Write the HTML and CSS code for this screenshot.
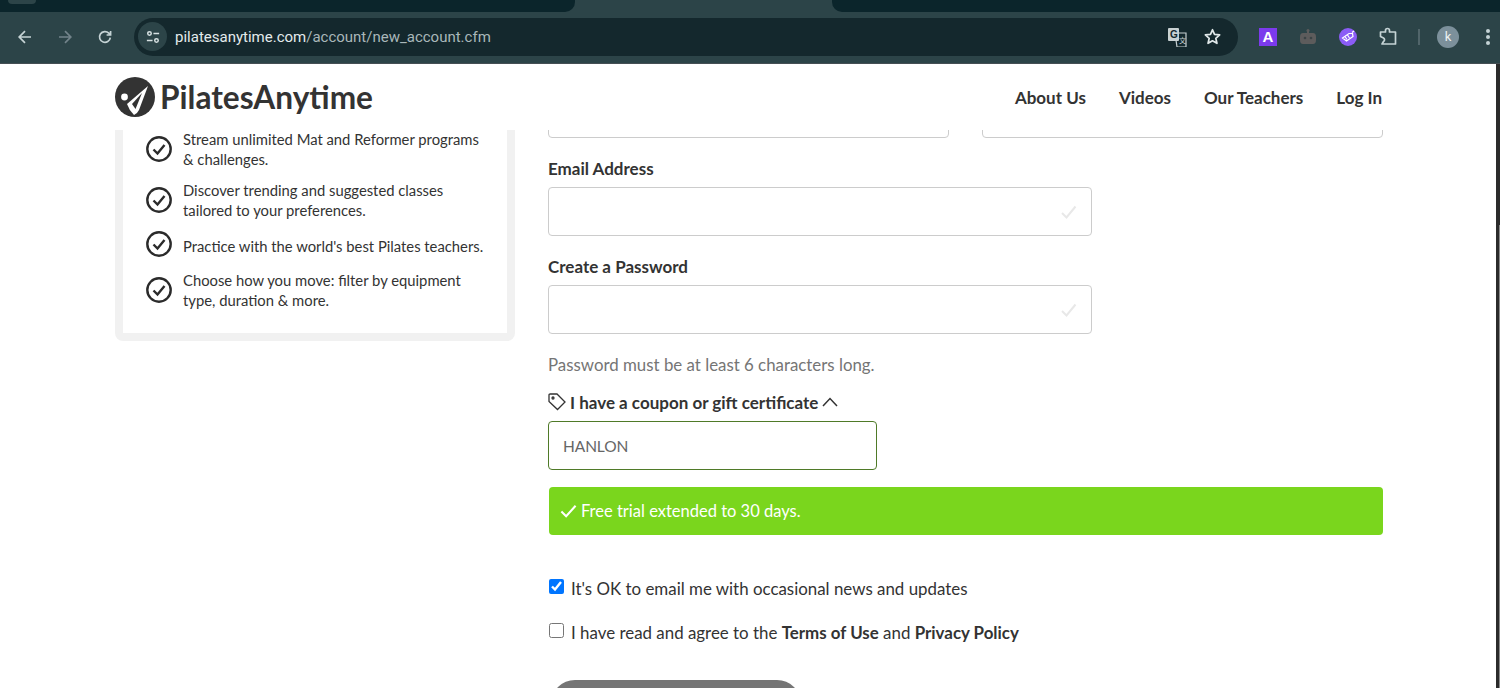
FILE: index.html
```html
<!DOCTYPE html>
<html lang="en">
<head>
    <meta charset="UTF-8">
    <title>Pilates Anytime - New Account</title>
    <link rel="stylesheet" href="styles.css">
</head>
<body>
    <div class="tab-strip">
        <div class="tab-left"><div class="tab-stub"></div></div>
        <div class="tab-active"></div>
        <div class="tab-right"></div>
    </div>

    <div class="toolbar">
        <div class="nav-buttons">
            <svg class="tool-icon" viewBox="0 0 16 16"><path d="M14 8H2.500M8 2.200 2.200 8 8 13.800"/></svg>
            <svg class="tool-icon dim" viewBox="0 0 16 16"><path d="M2 8h11.500M8 2.200 13.800 8 8 13.800"/></svg>
            <svg class="tool-icon" viewBox="0 0 16 16"><path d="M13.300 8.600A5.400 5.400 0 1 1 11.800 4.200L13.600 6M13.600 2v4H9.600"/></svg>
        </div>
        <div class="address-bar">
            <div class="site-chip">
                <svg class="chip-icon" viewBox="0 0 16 16"><circle cx="4" cy="4" r="2"/><path d="M8.500 4H15M1 12h6.500"/><circle cx="12" cy="12" r="2"/></svg>
            </div>
            <span class="url"><b>pilatesanytime.com</b>/account/new_account.cfm</span>
            <div class="address-end">
                <svg class="translate-icon" viewBox="0 0 20 20">
                    <path class="doc-back" d="M8 6h11v14H10z"/>
                    <rect class="doc-front" x="1" y="1" width="11" height="13" rx="1"/>
                    <text class="doc-letter" x="3" y="11">G</text>
                    <text class="doc-letter-back" x="12" y="16">文</text>
                </svg>
                <svg class="star-icon" viewBox="0 0 24 24"><path d="M12 3.500 14.600 9.300 21 10l-4.800 4.300 1.400 6.300L12 17.400 6.400 20.600l1.400-6.300L3 10l6.400-.7z"/></svg>
            </div>
        </div>
        <div class="extensions">
            <div class="ext-a">A</div>
            <svg class="ext-robot" viewBox="0 0 18 18">
                <circle cx="9" cy="2.500" r="1.500"/>
                <rect x="8" y="3" width="2" height="3"/>
                <path d="M4 5h10q3 0 3 4v3q0 4-3 4H4q-3 0-3-4V9q0-4 3-4z"/>
                <circle class="robot-eye" cx="6" cy="10" r="1.300"/>
                <circle class="robot-eye" cx="12" cy="10" r="1.300"/>
            </svg>
            <svg class="ext-tag" viewBox="0 0 18 18">
                <circle class="tag-bg" cx="9" cy="9" r="9"/>
                <path class="tag-line" d="M3.500 10 10 5.500h3.500l.5 3-6.500 4.500z"/>
                <path class="tag-line" d="M13 4.500 15 3M6 8.500l2 3M8.500 7l2 3"/>
            </svg>
            <svg class="ext-puzzle" viewBox="0 0 20 20"><path d="M2 5h5V3.500a2 2 0 0 1 4 0V5h6v12H3.500l1.500-2.500a2 2 0 0 0 0-3.500L2 9.500z"/></svg>
            <div class="toolbar-divider"></div>
            <div class="avatar">k</div>
            <div class="kebab"><i></i><i></i><i></i></div>
        </div>
    </div>

    <div class="viewport">
        <div class="page">
            <header class="site-header">
                <a class="logo">
                    <svg class="logo-mark" viewBox="0 0 40 40">
                        <circle cx="20" cy="20" r="20" fill="#333"/>
                        <circle cx="9.500" cy="20" r="3.400" fill="#fff"/>
                        <path d="M33 9 12 27q2 6 7 11 3-1 5-5z" fill="#fff"/>
                        <path d="M27 16 17 27l3.500 5z" fill="#333"/>
                    </svg>
                    <span class="logo-text">PilatesAnytime</span>
                </a>
                <nav class="site-nav">
                    <a>About Us</a>
                    <a>Videos</a>
                    <a>Our Teachers</a>
                    <a>Log In</a>
                </nav>
            </header>

            <main class="signup">
                <aside class="benefits">
                    <ul class="benefit-list">
                        <li>
                            <svg class="circle-check" viewBox="0 0 26 26"><circle cx="13" cy="13" r="11.700"/><path d="M7.500 13.500 11.500 17.500 18.500 9"/></svg>
                            <span>Stream unlimited Mat and Reformer programs &amp; challenges.</span>
                        </li>
                        <li>
                            <svg class="circle-check" viewBox="0 0 26 26"><circle cx="13" cy="13" r="11.700"/><path d="M7.500 13.500 11.500 17.500 18.500 9"/></svg>
                            <span>Discover trending and suggested classes tailored to your preferences.</span>
                        </li>
                        <li class="single-line">
                            <svg class="circle-check" viewBox="0 0 26 26"><circle cx="13" cy="13" r="11.700"/><path d="M7.500 13.500 11.500 17.500 18.500 9"/></svg>
                            <span>Practice with the world's best Pilates teachers.</span>
                        </li>
                        <li>
                            <svg class="circle-check" viewBox="0 0 26 26"><circle cx="13" cy="13" r="11.700"/><path d="M7.500 13.500 11.500 17.500 18.500 9"/></svg>
                            <span>Choose how you move: filter by equipment type, duration &amp; more.</span>
                        </li>
                    </ul>
                </aside>

                <form class="account-form">
                    <div class="name-row">
                        <input class="text-input" type="text">
                        <input class="text-input" type="text">
                    </div>

                    <label class="field-label">Email Address</label>
                    <div class="input-wrap">
                        <input class="text-input" type="text">
                        <svg class="input-check" viewBox="0 0 16 14"><path d="M1.500 8 6 12.500 15 1.500"/></svg>
                    </div>

                    <label class="field-label">Create a Password</label>
                    <div class="input-wrap">
                        <input class="text-input" type="text">
                        <svg class="input-check" viewBox="0 0 16 14"><path d="M1.500 8 6 12.500 15 1.500"/></svg>
                    </div>

                    <p class="hint">Password must be at least 6 characters long.</p>

                    <div class="coupon-toggle">
                        <svg class="tag-icon" viewBox="0 0 18 18"><path d="M1 2.200Q1 1 2.200 1H9l8 8-7.500 7.500-8.500-8z"/><circle cx="5" cy="5" r="1"/></svg>
                        <span>I have a coupon or gift certificate</span>
                        <svg class="chevron-icon" viewBox="0 0 16 10"><path d="M1 9 8 1.500 15 9"/></svg>
                    </div>
                    <input class="coupon-input" type="text" value="HANLON">

                    <div class="coupon-success">
                        <svg class="success-check" viewBox="0 0 18 14"><path d="M1.500 7.500 6.500 12.500 16.500 1.500"/></svg>
                        <span>Free trial extended to 30 days.</span>
                    </div>

                    <label class="check-row first-check">
                        <input type="checkbox" checked>
                        <span>It's OK to email me with occasional news and updates</span>
                    </label>
                    <label class="check-row">
                        <input type="checkbox">
                        <span>I have read and agree to the <b>Terms of Use</b> and <b>Privacy Policy</b></span>
                    </label>

                    <button class="submit-button" type="button"></button>
                </form>
            </main>
        </div>
        <div class="scrollbar"><div class="scroll-thumb"></div></div>
    </div>
</body>
</html>
```

FILE: styles.css
```css
* {
    box-sizing: border-box;
}

html, body {
    height: 688px;
    overflow: hidden;
}

body {
    margin: 0;
    background: #fff;
    font-family: "Lato", "Noto Sans", sans-serif;
    color: #333;
}

/* browser chrome */
.tab-strip {
    height: 12px;
    display: flex;
    background: #2c4448;
}

.tab-left {
    width: 575px;
    background: #0b252b;
    border-bottom-right-radius: 10px;
}

.tab-stub {
    width: 28px;
    height: 4px;
    margin-left: 8px;
    background: #2c4448;
    border-radius: 0 0 8px 8px;
}

.tab-active {
    width: 257px;
}

.tab-right {
    flex: 1;
    background: #0b252b;
    border-bottom-left-radius: 10px;
}

.toolbar {
    height: 52px;
    display: flex;
    align-items: center;
    padding: 0 0 2px 0;
    background: #2c4448;
    border-bottom: 1px solid #454f54;
}

.nav-buttons {
    width: 134px;
    display: flex;
    align-items: center;
    gap: 24px;
    padding-left: 17px;
    flex-shrink: 0;
}

.tool-icon {
    width: 16px;
    height: 16px;
    fill: none;
    stroke: #c5d3d5;
    stroke-width: 1.700;
}

.tool-icon.dim {
    stroke: #72838a;
}

.address-bar {
    width: 1104px;
    height: 38px;
    display: flex;
    align-items: center;
    padding-left: 4px;
    background: #14282d;
    border-radius: 19px;
    flex-shrink: 0;
}

.site-chip {
    width: 29px;
    height: 29px;
    display: flex;
    align-items: center;
    justify-content: center;
    background: #2c4448;
    border-radius: 50%;
}

.chip-icon {
    width: 14px;
    height: 14px;
    fill: none;
    stroke: #d6e0e1;
    stroke-width: 1.700;
}

.url {
    margin-left: 8px;
    padding-top: 1px;
    font-family: "Roboto", sans-serif;
    font-size: 15px;
    color: #a9b7b9;
}

.url b {
    font-weight: 400;
    color: #e3ebec;
}

.address-end {
    margin-left: auto;
    display: flex;
    align-items: center;
    gap: 16px;
    padding-right: 16px;
}

.translate-icon {
    width: 20px;
    height: 20px;
}

.doc-back {
    fill: #14282d;
    stroke: #c5d0d2;
    stroke-width: 1.200;
}

.doc-front {
    fill: #c9d2d3;
}

.doc-letter {
    font-family: "Liberation Sans", sans-serif;
    font-size: 10px;
    font-weight: 700;
    fill: #14282d;
}

.doc-letter-back {
    font-family: "Noto Sans CJK SC", sans-serif;
    font-size: 7px;
    fill: #c5d0d2;
}

.star-icon {
    width: 19px;
    height: 19px;
    fill: none;
    stroke: #e0e8e9;
    stroke-width: 2.200;
    stroke-linejoin: round;
}

.extensions {
    flex: 1;
    display: flex;
    align-items: center;
    padding-left: 21px;
}

.ext-a {
    width: 18px;
    height: 18px;
    background: #7c3aed;
    color: #fff;
    font-family: "Liberation Sans", sans-serif;
    font-size: 15px;
    font-weight: 700;
    line-height: 18px;
    text-align: center;
}

.ext-robot {
    width: 18px;
    height: 18px;
    margin-left: 22px;
    fill: #5d5c5c;
}

.robot-eye {
    fill: #3b4446;
}

.ext-tag {
    width: 18px;
    height: 18px;
    margin-left: 22px;
}

.tag-bg {
    fill: #8b5cf6;
}

.tag-line {
    fill: none;
    stroke: #fff;
    stroke-width: 1.200;
}

.ext-puzzle {
    width: 21px;
    height: 20px;
    margin-left: 21px;
    fill: none;
    stroke: #c5d3d5;
    stroke-width: 1.700;
    stroke-linejoin: round;
}

.toolbar-divider {
    width: 2px;
    height: 16px;
    margin-left: 19px;
    background: #51656a;
}

.avatar {
    width: 22px;
    height: 22px;
    margin-left: 17px;
    background: #7c909b;
    border-radius: 50%;
    color: #eef2f3;
    font-family: "Roboto", sans-serif;
    font-size: 13px;
    line-height: 22px;
    text-align: center;
}

.kebab {
    display: flex;
    flex-direction: column;
    gap: 2px;
    margin-left: 27px;
}

.kebab i {
    width: 4px;
    height: 4px;
    background: #c5d3d5;
    border-radius: 50%;
}

/* page */
.viewport {
    height: 624px;
    display: flex;
}

.page {
    flex: 1;
    min-width: 0;
}

.scrollbar {
    width: 4px;
    background: #2b2b2b;
    padding: 161px 0 0 3px;
}

.scroll-thumb {
    width: 1px;
    height: 100%;
    background: #8a8a8a;
}

.site-header {
    height: 66px;
    display: flex;
    align-items: center;
    justify-content: space-between;
    padding: 0 114px 0 115px;
    background: #fff;
}

.logo {
    display: flex;
    align-items: center;
    gap: 5px;
}

.logo-mark {
    width: 40px;
    height: 40px;
}

.logo-text {
    font-family: "Lato", sans-serif;
    font-size: 31.600px;
    font-weight: 700;
    color: #333;
}

.site-nav {
    display: flex;
    gap: 33px;
    font-size: 17px;
    font-weight: 700;
    color: #333;
}

.signup {
    height: 558px;
    display: flex;
    gap: 33px;
    padding-left: 115px;
    overflow: hidden;
}

.benefits {
    width: 400px;
    height: 211px;
    padding: 0 8px 8px;
    background: #f1f1f1;
    border-radius: 0 0 8px 8px;
}

.benefit-list {
    height: 204px;
    margin: -1px 0 0;
    padding: 0 22px 0 23px;
    list-style: none;
    background: #fff;
    display: flex;
    flex-direction: column;
    gap: 11px;
    font-size: 14.800px;
    line-height: 20px;
    color: #333;
}

.benefit-list li {
    display: flex;
    align-items: center;
    gap: 11px;
    min-height: 26px;
}

.benefit-list li.single-line {
    align-items: flex-start;
    height: 28px;
}

.single-line span {
    padding-top: 5px;
}

.circle-check {
    width: 26px;
    height: 26px;
    flex-shrink: 0;
    fill: none;
    stroke: #2b2b2b;
    stroke-width: 2.400;
}

.account-form {
    width: 835px;
    margin-top: -41px;
    flex-shrink: 0;
}

.name-row {
    display: flex;
    gap: 33px;
}

.text-input {
    display: block;
    width: 100%;
    height: 49px;
    background: #fff;
    border: 1px solid #ccc;
    border-radius: 4px;
}

.name-row .text-input {
    flex: 1;
    width: auto;
    min-width: 0;
}

.field-label {
    display: block;
    margin: 19px 0 6px;
    font-size: 17px;
    font-weight: 700;
    line-height: 24px;
    color: #333;
}

.input-wrap {
    position: relative;
    width: 544px;
}

.input-check {
    position: absolute;
    top: 18px;
    right: 15px;
    width: 17px;
    height: 14px;
    fill: none;
    stroke: #e8e8e8;
    stroke-width: 2;
}

.hint {
    margin: 19px 0 13px;
    font-size: 16.850px;
    line-height: 24px;
    color: #757575;
}

.coupon-toggle {
    display: flex;
    align-items: center;
    gap: 4px;
    height: 24px;
    margin-bottom: 7px;
    font-size: 17px;
    font-weight: 700;
    color: #333;
}

.tag-icon {
    width: 18px;
    height: 18px;
    fill: none;
    stroke: #333;
    stroke-width: 1.300;
}

.chevron-icon {
    width: 16px;
    height: 10px;
    fill: none;
    stroke: #333;
    stroke-width: 1.500;
}

.coupon-input {
    display: block;
    width: 329px;
    height: 49px;
    padding: 0 14px;
    border: 1px solid #4f7a28;
    border-radius: 4px;
    font-family: inherit;
    font-size: 15.500px;
    letter-spacing: -0.1px;
    color: #666;
}

.coupon-success {
    height: 48px;
    margin: 17px 0 0 1px;
    display: flex;
    align-items: center;
    gap: 4px;
    padding-left: 11px;
    background: #7ad61d;
    border-radius: 4px;
    font-size: 16.500px;
    color: #fff;
}

.success-check {
    width: 17px;
    height: 14px;
    fill: none;
    stroke: #fff;
    stroke-width: 2.200;
}

.check-row {
    display: flex;
    align-items: center;
    gap: 7px;
    height: 24px;
    margin-top: 20px;
    font-size: 16.900px;
    color: #333;
}

.check-row.first-check {
    margin-top: 41px;
}

.check-row input {
    width: 15px;
    height: 15px;
    margin: -4px 0 0 1px;
    flex-shrink: 0;
}

.submit-button {
    display: block;
    width: 250px;
    height: 48px;
    margin: 36px 0 0 3px;
    background: #757575;
    border: none;
    border-radius: 24px;
}
```
